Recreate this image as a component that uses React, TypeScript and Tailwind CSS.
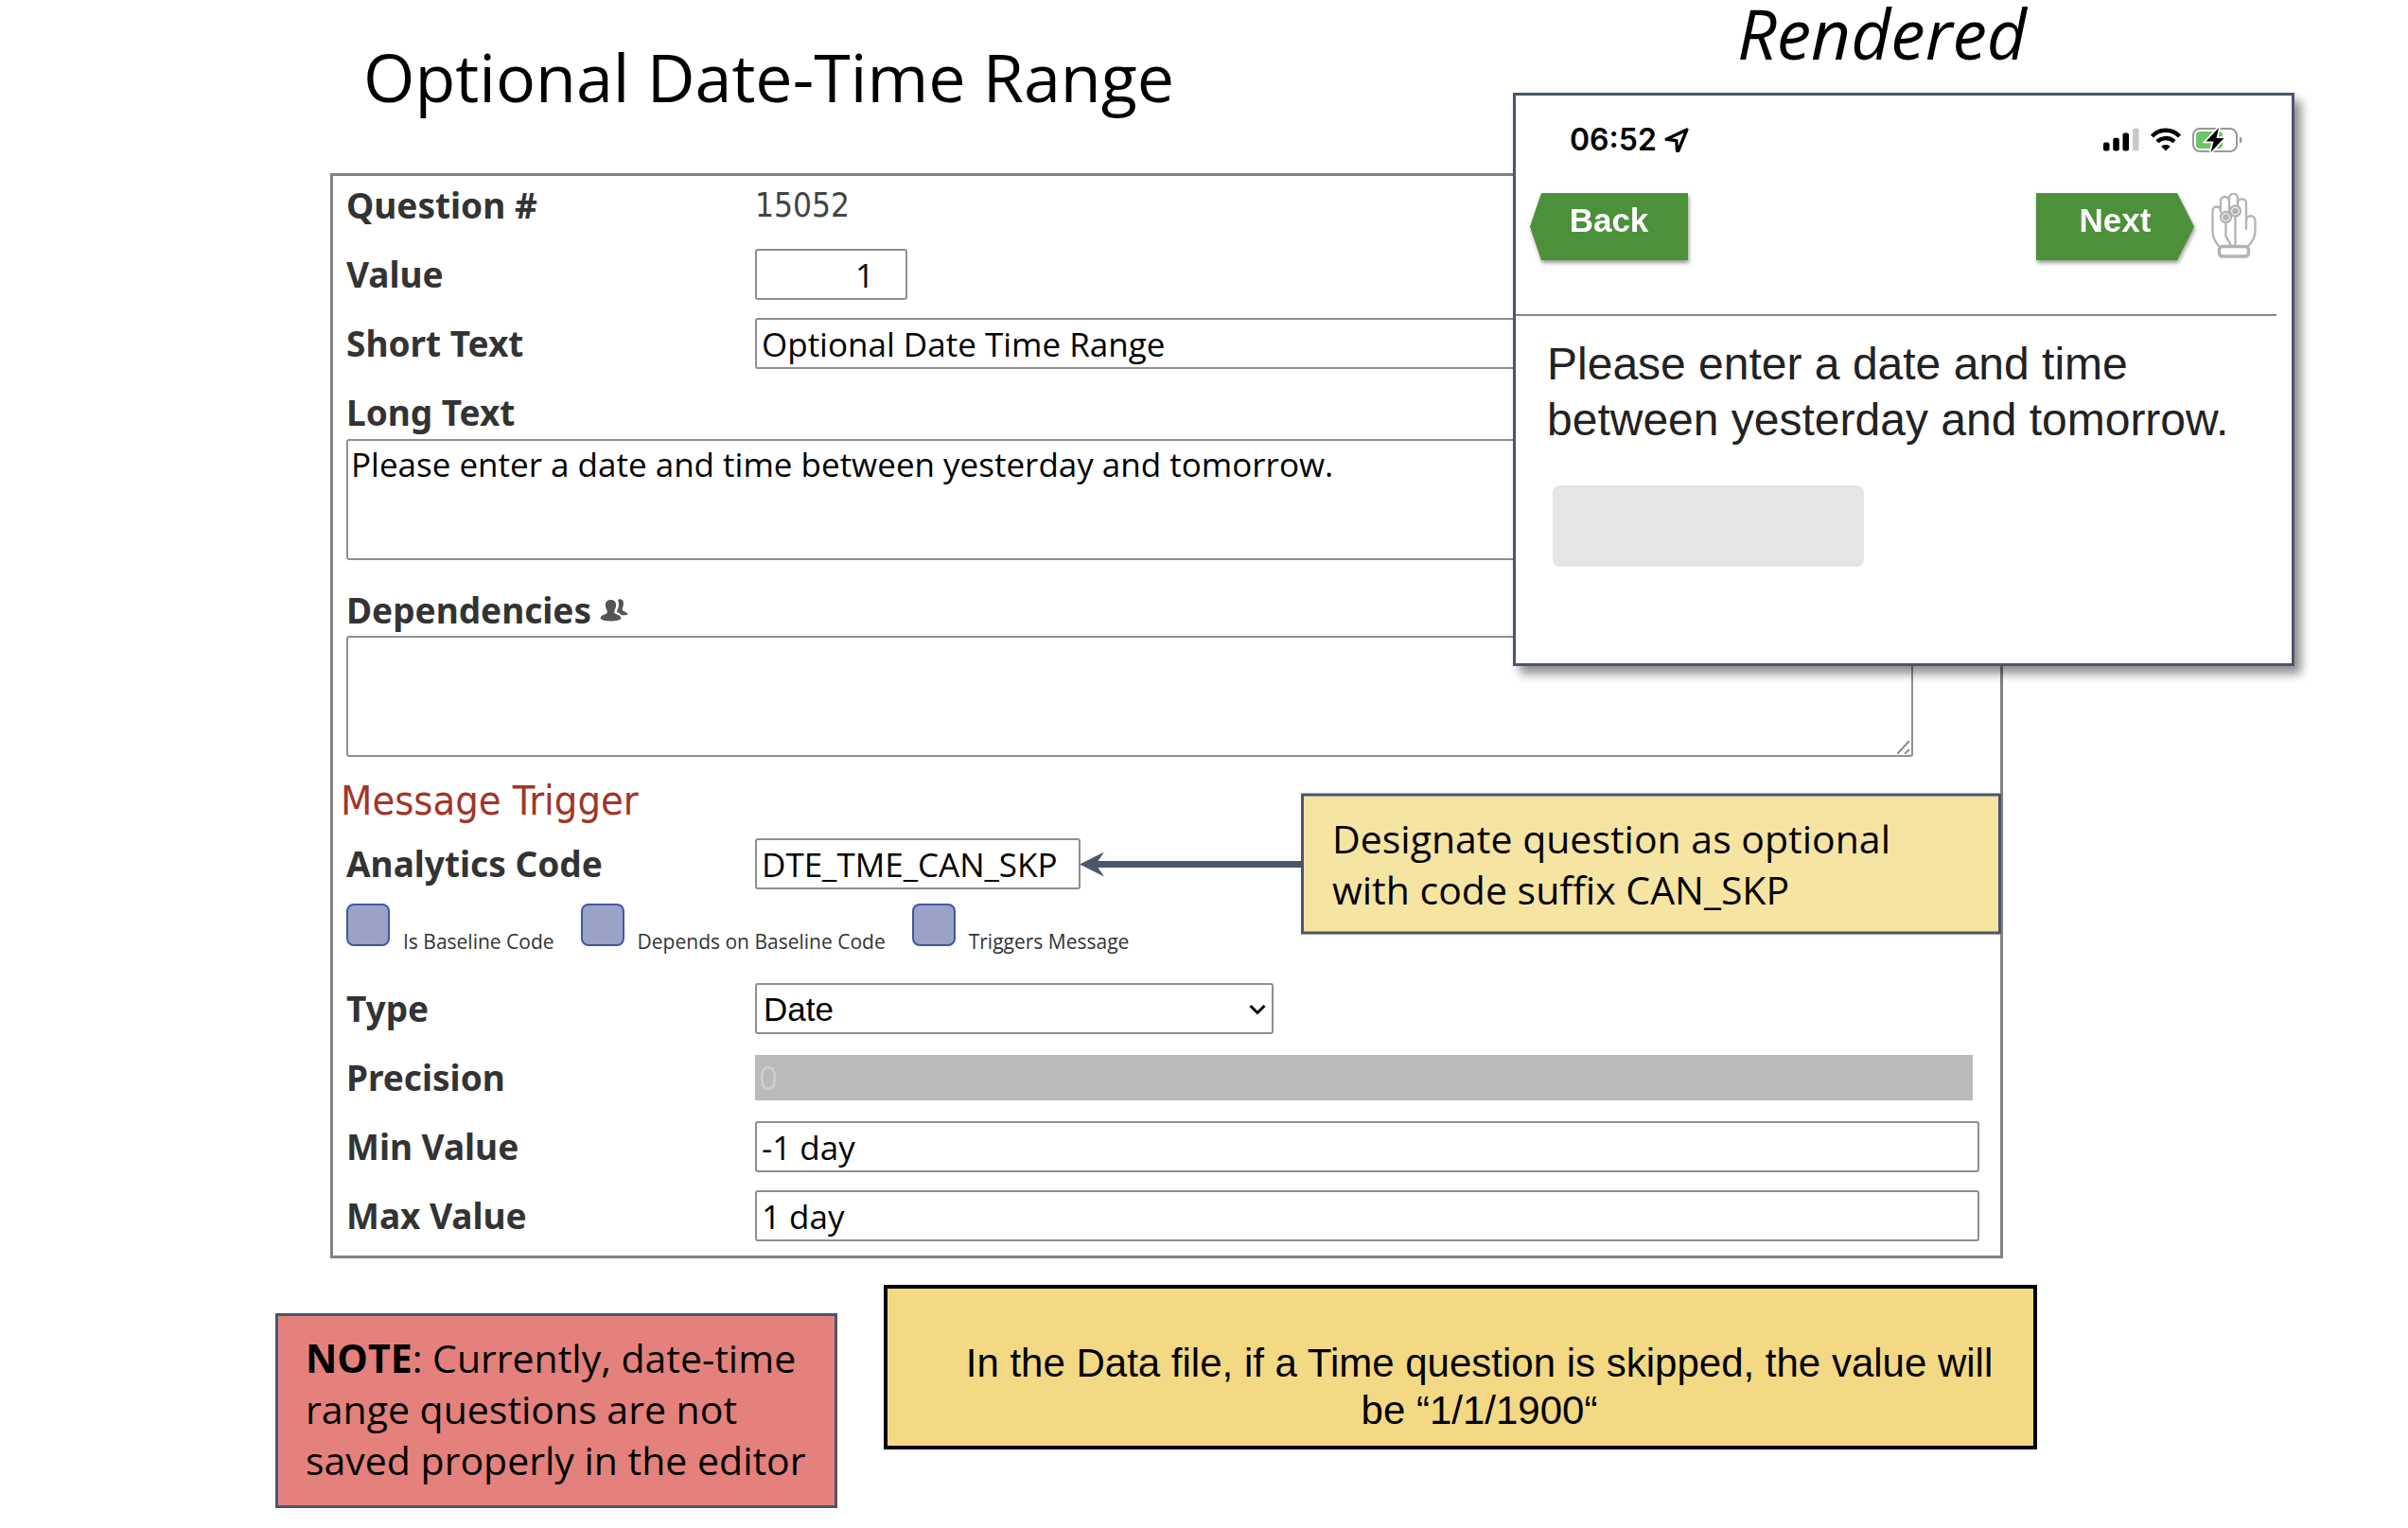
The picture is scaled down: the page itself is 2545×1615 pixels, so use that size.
import { ReactNode } from "react"

const inputStyle = "border-2 border-[#8f8f8f] rounded-[3px] bg-white text-black text-[35px] font-['Open_Sans',sans-serif]"

const labelStyle = "text-[37px] font-bold text-[#333] font-['Noto_Sans',sans-serif]"

interface RowProps {
    id?: string
    label: string
    children: ReactNode
}

const Row: React.FC<RowProps> = ({ id, label, children }) => {
    return (
        <div className="relative flex h-[54px] items-center">
            <label htmlFor={id} className={`w-[432px] shrink-0 ${labelStyle}`}>
                {label}
            </label>
            {children}
        </div>
    )
}

interface TextFieldProps {
    id: string
    value: string
    className: string
}

const TextField: React.FC<TextFieldProps> = ({ id, value, className }) => {
    return (
        <input
            id={id}
            type="text"
            defaultValue={value}
            className={`h-full min-w-0 pl-[5px] ${inputStyle} ${className}`}
        />
    )
}

interface CheckProps {
    label: string
}

const Check: React.FC<CheckProps> = ({ label }) => {
    return (
        <label className="flex gap-[14px]">
            <input
                type="checkbox"
                className="
                appearance-none
                h-[45px]
                w-[46px]
                rounded-lg
                border-2
                border-[#4257a3]
                bg-[#9aa3c7]"
            />
            <span className="
                mt-7
                whitespace-nowrap
                text-[21px]
                leading-6
                text-[#333]
                font-['Open_Sans',sans-serif]
            ">
                {label}
            </span>
        </label>
    )
}

const PeopleIcon = () => (
    <svg width="30" height="24" viewBox="0 0 30 24" fill="#555">
        <path d="M19 1c2-1.600 6-1 6 3.500 0 3-.8 4-1.200 5.500-.3 1.600.2 2.500 2 3.200 2.600 1 3.700 1.600 3.700 3.300-1.500.8-4 1-7 .6-1-1.500-2.500-2.300-4.300-3-.5-1.200.6-2.500 1.200-4.500.8-3 .8-6-.4-8.600z" />
        <path d="M11.500 1c4 0 5.800 2.500 5.600 6-.2 3-1.600 4.500-1.900 6.200-.2 1.700.8 2.500 3 3.300 2.800 1 4.300 2 4.300 4.500-2 1.700-6.200 2.500-11 2.500S2.500 22.700.5 21c0-2.500 1.500-3.500 4.300-4.500 2.200-.8 3.200-1.600 3-3.300C7.500 11.500 6.100 10 5.900 7c-.2-3.500 1.600-6 5.600-6z" />
    </svg>
)

const LocationIcon = () => (
    <svg width="26" height="26" viewBox="0 0 26 26" fill="none" stroke="#000" strokeWidth="3.400" strokeLinejoin="round">
        <path d="M23.800 2 2.200 12.200l10.600 1.400.8 10.700h1.200z" />
    </svg>
)

const SignalIcon = () => (
    <svg width="38" height="25" viewBox="0 0 38 25">
        <rect x="0" y="15.500" width="6.500" height="9" rx="2" />
        <rect x="10.300" y="10.800" width="6.500" height="13.700" rx="2" />
        <rect x="20.500" y="5.500" width="6.500" height="19" rx="2" />
        <rect x="31" y="0.500" width="6.500" height="24" rx="2" fill="#c8c8c8" />
    </svg>
)

const WifiIcon = () => (
    <svg width="32" height="25" viewBox="0 0 32 25">
        <g fill="none" stroke="#000" strokeWidth="4.400">
            <path d="M1.500 9C9 .6 23 .6 30.500 9" />
            <path d="M7 14.800c5-5 13-5 18 0" />
        </g>
        <path d="M11.200 19.700c2.800-2.400 6.800-2.400 9.600 0L16 24.500z" />
    </svg>
)

const BatteryIcon = () => (
    <svg width="53" height="28" viewBox="0 0 53 28">
        <rect x="1" y="2" width="46" height="24" rx="7" fill="#fff" stroke="#999" strokeWidth="2" />
        <rect x="4" y="5" width="28" height="18" rx="4" fill="#6fc468" />
        <path d="M50 10.500c3.600 1 3.600 6 0 7z" fill="#999" />
        <path d="M28 1 14.500 15.500h8L19.500 27 33.500 12h-8z" stroke="#fff" strokeWidth="3.500" />
        <path d="M28 1 14.500 15.500h8L19.500 27 33.500 12h-8z" />
    </svg>
)

const HandIcon = () => (
    <svg width="48" height="72" viewBox="0 0 48 72" fill="none" stroke="#b3b3b3" strokeWidth="2.300" strokeLinecap="round" strokeLinejoin="round">
        <path d="M9 57C4 52 1.500 46 1.500 40V19c0-6 8.500-6 8.500 0" />
        <path d="M10 20V8.500C10 2.500 19 2.500 19 8.500V20" />
        <path d="M19 8V5c0-5.500 9-5.500 9 0v13" />
        <path d="M28 18v-7.500c0-5.500 9-5.500 9 0V38" />
        <path d="M37 29.500c0-7 9.500-7 9.500 0V39c0 7-2.500 13-8.500 18" />
        <path d="M15.500 31v15l6 10M25.500 25v31" />
        <circle cx="15.500" cy="25.500" r="5.500" fill="#fff" />
        <circle cx="25.500" cy="19" r="5.500" fill="#fff" />
        <circle cx="15.500" cy="25.500" r="2.200" fill="#b3b3b3" />
        <circle cx="25.500" cy="19" r="2.200" fill="#b3b3b3" />
        <rect x="8.500" y="56.500" width="31" height="10.500" rx="3.500" strokeWidth="3.400" fill="#fff" />
    </svg>
)

const Phone = () => {
    return (
        <div className="
            border-[3px]
            border-[#4a566e]
            bg-white
            pb-[102px]
            shadow-[7px_8px_10px_rgba(0,0,0,0.45)]
        ">
            <div className="flex h-[93px] items-center justify-between pl-[57px] pr-[52px]">
                <div className="flex items-center gap-2 text-[32px] font-semibold text-black font-['Inter',sans-serif]">
                    06:52
                    <LocationIcon />
                </div>
                <div className="flex items-center gap-3">
                    <SignalIcon />
                    <WifiIcon />
                    <BatteryIcon />
                </div>
            </div>
            <div className="
                mt-[10px]
                flex
                h-[71px]
                items-center
                justify-between
                pl-[15px]
                pr-[37px]
                text-[35px]
                font-bold
                text-white
                font-['Liberation_Sans',sans-serif]
            ">
                <div className="drop-shadow-[1px_3px_2px_rgba(0,0,0,0.4)]">
                    <button className="
                        h-[71px]
                        w-[167px]
                        bg-[#4c9039]
                        pb-3
                        [clip-path:polygon(12px_0,100%_0,100%_100%,12px_100%,0_50%)]
                    ">
                        Back
                    </button>
                </div>
                <div className="flex items-center gap-[18px]">
                    <div className="drop-shadow-[1px_3px_2px_rgba(0,0,0,0.4)]">
                        <button className="
                            h-[71px]
                            w-[167px]
                            bg-[#4c9039]
                            pb-3
                            [clip-path:polygon(0_0,149px_0,100%_50%,149px_100%,0_100%)]
                        ">
                            Next
                        </button>
                    </div>
                    <HandIcon />
                </div>
            </div>
            <hr className="mr-4 mt-[57px] border-t-2 border-[#888]" />
            <label
                htmlFor="answer"
                className="
                mt-[21px]
                block
                pl-[33px]
                pr-10
                text-[48px]
                leading-[59px]
                text-[#222]
                font-['Liberation_Sans',sans-serif]"
            >
                Please enter a date and time <br />
                between yesterday and tomorrow.
            </label>
            <input
                id="answer"
                type="text"
                className="ml-[39px] mt-10 block h-[86px] w-[329px] rounded-lg bg-[#e5e5e5]"
            />
        </div>
    )
}

const Callout = () => {
    return (
        <div className="absolute -right-[23px] left-[775px] top-1/2 flex -translate-y-1/2 items-center">
            <svg width="234" height="28" viewBox="0 0 234 28" fill="#4a566e">
                <path d="M0 14 26 1l-6.500 9.500H234v7H19.500L26 27z" />
            </svg>
            <p className="
                flex-1
                border-[3px]
                border-[#4a566e]
                bg-[#f6e4a2]
                pb-[18px]
                pl-[30px]
                pr-16
                pt-[17px]
                text-[41px]
                leading-[54px]
                text-black
                font-['Open_Sans',sans-serif]
            ">
                Designate question as optional with code suffix CAN_SKP
            </p>
        </div>
    )
}

export default function App() {
    return (
        <main className="relative min-h-screen overflow-hidden bg-white">
            <h1 className="
                pb-[54px]
                pl-[384px]
                pt-[33px]
                text-[70px]
                leading-[96px]
                text-black
                font-['Open_Sans',sans-serif]
            ">
                Optional Date-Time Range
            </h1>

            <form className="ml-[349px] mr-[428px] border-[3px] border-[#828282] px-2 pb-[15px] pt-1">
                <div className="flex flex-col gap-[19px] pl-[6px] pr-[14px]">
                    <Row label="Question #">
                        <span className="text-[35px] text-[#444] font-['DejaVu_Sans_Condensed','DejaVu_Sans',sans-serif]">
                            15052
                        </span>
                    </Row>
                    <Row id="value" label="Value">
                        <TextField id="value" value="1" className="w-[161px] pr-[33px] text-right" />
                    </Row>
                    <Row id="short" label="Short Text">
                        <TextField id="short" value="Optional Date Time Range" className="flex-1" />
                    </Row>
                    <div className="mr-[70px]">
                        <label htmlFor="long" className={`block pb-px leading-[54px] ${labelStyle}`}>
                            Long Text
                        </label>
                        <textarea
                            id="long"
                            defaultValue="Please enter a date and time between yesterday and tomorrow."
                            className={`block h-32 w-full resize-none pl-[3px] leading-[50px] ${inputStyle}`}
                        />
                    </div>
                </div>
                <div className="relative mt-[26px] pl-[6px] pr-[84px]">
                    <label htmlFor="deps" className={`flex h-[54px] items-center gap-[9px] ${labelStyle}`}>
                        Dependencies
                        <PeopleIcon />
                    </label>
                    <textarea id="deps" className={`block h-32 w-full resize-none ${inputStyle}`} />
                    <svg
                        width="14"
                        height="14"
                        viewBox="0 0 14 14"
                        stroke="#888"
                        strokeWidth="2"
                        className="absolute bottom-[3px] right-[87px]"
                    >
                        <path d="M0 14 13 0M8 14l5-5" />
                    </svg>
                </div>

                <h2 className="
                    pt-[6px]
                    text-[43px]
                    leading-[80px]
                    text-[#a23528]
                    font-['DejaVu_Sans_Condensed','DejaVu_Sans',sans-serif]
                ">
                    Message Trigger
                </h2>

                <div className="pl-[6px] pr-[14px]">
                    <Row id="code" label="Analytics Code">
                        <TextField id="code" value="DTE_TME_CAN_SKP" className="w-[344px]" />
                        <Callout />
                    </Row>
                    <div className="mt-[15px] flex gap-7">
                        <Check label="Is Baseline Code" />
                        <Check label="Depends on Baseline Code" />
                        <Check label="Triggers Message" />
                    </div>
                    <div className="mt-8 flex flex-col gap-[19px]">
                        <Row id="type" label="Type">
                            <div className="relative h-full w-[548px]">
                                <select
                                    id="type"
                                    className="
                                    h-full
                                    w-full
                                    appearance-none
                                    rounded-[3px]
                                    border-2
                                    border-[#8f8f8f]
                                    bg-white
                                    pl-[7px]
                                    text-[35px]
                                    text-black
                                    font-['Liberation_Sans',sans-serif]"
                                >
                                    <option>Date</option>
                                </select>
                                <svg
                                    width="18"
                                    height="12"
                                    viewBox="0 0 18 12"
                                    fill="none"
                                    stroke="#000"
                                    strokeWidth="3"
                                    className="pointer-events-none absolute right-2 top-[22px]"
                                >
                                    <path d="m1.500 2 7.500 7.500L16.500 2" />
                                </svg>
                            </div>
                        </Row>
                        <Row id="precision" label="Precision">
                            <input
                                id="precision"
                                type="text"
                                defaultValue="0"
                                className="
                                mr-[7px]
                                h-12
                                min-w-0
                                flex-1
                                bg-[#bababa]
                                pl-1
                                text-[35px]
                                text-[#cecece]
                                font-['Open_Sans',sans-serif]"
                            />
                        </Row>
                        <Row id="min" label="Min Value">
                            <TextField id="min" value="-1 day" className="flex-1" />
                        </Row>
                        <Row id="max" label="Max Value">
                            <TextField id="max" value="1 day" className="flex-1" />
                        </Row>
                    </div>
                </div>
            </form>

            <div className="ml-[291px] mr-[392px] mt-7 flex items-start gap-[49px]">
                <p className="
                    mt-[30px]
                    w-[594px]
                    shrink-0
                    border-[3px]
                    border-[#4a566e]
                    bg-[#e4817c]
                    pb-[21px]
                    pl-[29px]
                    pr-5
                    pt-[17px]
                    text-[41px]
                    leading-[54px]
                    text-black
                    font-['Open_Sans',sans-serif]
                ">
                    <b>NOTE</b>: Currently, date-time range questions are not saved properly in the editor
                </p>
                <p className="
                    flex-1
                    border-4
                    border-black
                    bg-[#f3d984]
                    pb-3
                    pl-[68px]
                    pr-7
                    pt-[54px]
                    text-center
                    text-[42px]
                    leading-[50px]
                    text-black
                    font-['Liberation_Sans',sans-serif]
                ">
                    In the Data file, if a Time question is skipped, the value will be “1/1/1900“
                </p>
            </div>

            <aside className="absolute right-[120px] top-0 w-[826px]">
                <h2 className="
                    pb-7
                    pr-[46px]
                    text-center
                    text-[73px]
                    italic
                    leading-[70px]
                    text-black
                    font-['Open_Sans',sans-serif]
                ">
                    Rendered
                </h2>
                <Phone />
            </aside>
        </main>
    )
}
